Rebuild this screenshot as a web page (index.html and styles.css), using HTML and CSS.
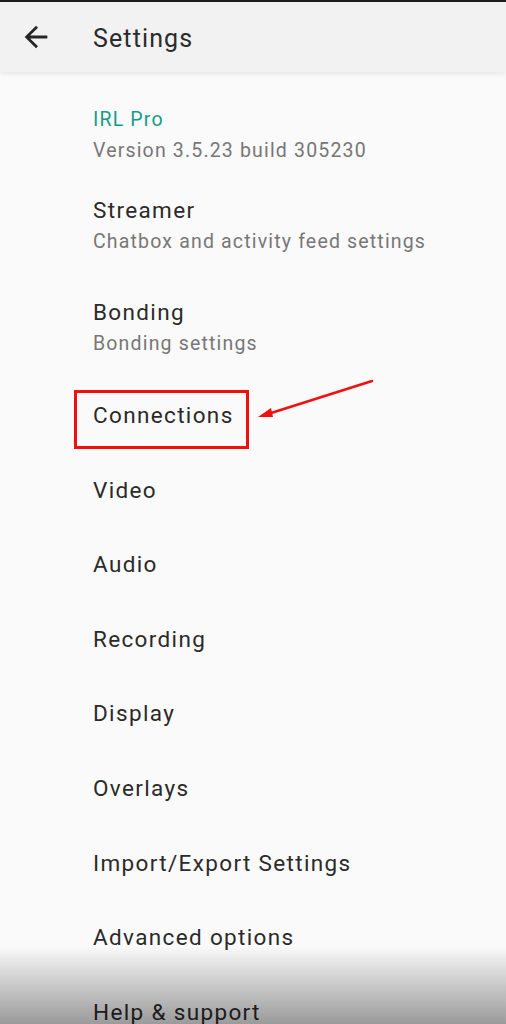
FILE: index.html
```html
<!DOCTYPE html>
<html>
<head>
<meta charset="utf-8">
<link rel="stylesheet" href="styles.css">
</head>
<body>
<div class="screen">
  <div class="statusline"></div>
  <header class="appbar">
    <svg class="back" viewBox="0 0 24 24" width="34" height="34"><path d="M20 11H7.83l5.59-5.59L12 4l-8 8 8 8 1.41-1.41L7.83 13H20v-2z" fill="#262626"/></svg>
    <div class="title">Settings</div>
  </header>
  <main class="list">
    <div class="item about">
      <div class="t accent">IRL Pro</div>
      <div class="s">Version 3.5.23 build 305230</div>
    </div>
    <div class="item">
      <div class="t">Streamer</div>
      <div class="s">Chatbox and activity feed settings</div>
    </div>
    <div class="item">
      <div class="t">Bonding</div>
      <div class="s">Bonding settings</div>
    </div>
    <div class="item">
      <div class="t"><span class="mark">Connections</span></div>
    </div>
    <div class="item"><div class="t">Video</div></div>
    <div class="item"><div class="t">Audio</div></div>
    <div class="item"><div class="t">Recording</div></div>
    <div class="item"><div class="t">Display</div></div>
    <div class="item"><div class="t">Overlays</div></div>
    <div class="item"><div class="t">Import/Export Settings</div></div>
    <div class="item"><div class="t">Advanced options</div></div>
    <div class="item"><div class="t">Help &amp; support</div></div>
  </main>
  <svg class="arrow" width="130" height="50" viewBox="0 0 130 50">
    <line x1="118" y1="4" x2="14" y2="37" stroke="#f01010" stroke-width="2.6" stroke-linecap="round"/>
    <path d="M4 40 L17 31 L19 40 Z" fill="#f01010"/>
  </svg>
  <div class="fade"></div>
</div>
</body>
</html>
```
FILE: styles.css
```css
html, body {
  margin: 0;
  padding: 0;
}
body {
  width: 506px;
  height: 1024px;
  overflow: hidden;
  background: #fafafa;
  font-family: Roboto, "Noto Sans", sans-serif;
}
.screen {
  position: relative;
  width: 506px;
  height: 1024px;
  overflow: hidden;
  background: #fafafa;
}
.statusline {
  height: 2px;
  background: #1f1f1f;
}
.appbar {
  position: relative;
  z-index: 2;
  height: 70px;
  background: #f2f2f2;
  display: flex;
  align-items: center;
  box-shadow: 0 2px 5px rgba(0,0,0,0.08);
}
.back {
  margin-left: 19px;
  margin-top: -1px;
}
.title {
  margin-left: 40px;
  font-size: 25px;
  letter-spacing: 0.045em;
  color: #2b2b2b;
  margin-top: 3px;
}
.list {
  padding-top: 9.6px;
}
.item {
  padding: 22.3px 0 22.3px 93px;
}
.item.about {
  padding-bottom: 10.7px;
}
.t {
  font-size: 22.5px;
  line-height: 30px;
  letter-spacing: 0.06em;
  color: #2a2a2a;
}
.t.accent {
  color: #169a8b;
  font-size: 19.5px;
  padding-top: 1px;
  margin-bottom: -1px;
}
.s {
  font-size: 19.5px;
  line-height: 28px;
  letter-spacing: 0.06em;
  color: #777777;
  padding-top: 3px;
  margin-bottom: -3px;
}
.mark {
  position: relative;
}
.mark::after {
  content: "";
  position: absolute;
  left: -19px;
  top: -12px;
  width: 169px;
  height: 53px;
  border: 3px solid #f01010;
}
.arrow {
  position: absolute;
  left: 254px;
  top: 377px;
}
.fade {
  position: absolute;
  left: 0;
  right: 0;
  bottom: 0;
  height: 78px;
  background: linear-gradient(to bottom, rgba(0,0,0,0), rgba(0,0,0,0.12) 30%, rgba(0,0,0,0.38));
  pointer-events: none;
}
```
